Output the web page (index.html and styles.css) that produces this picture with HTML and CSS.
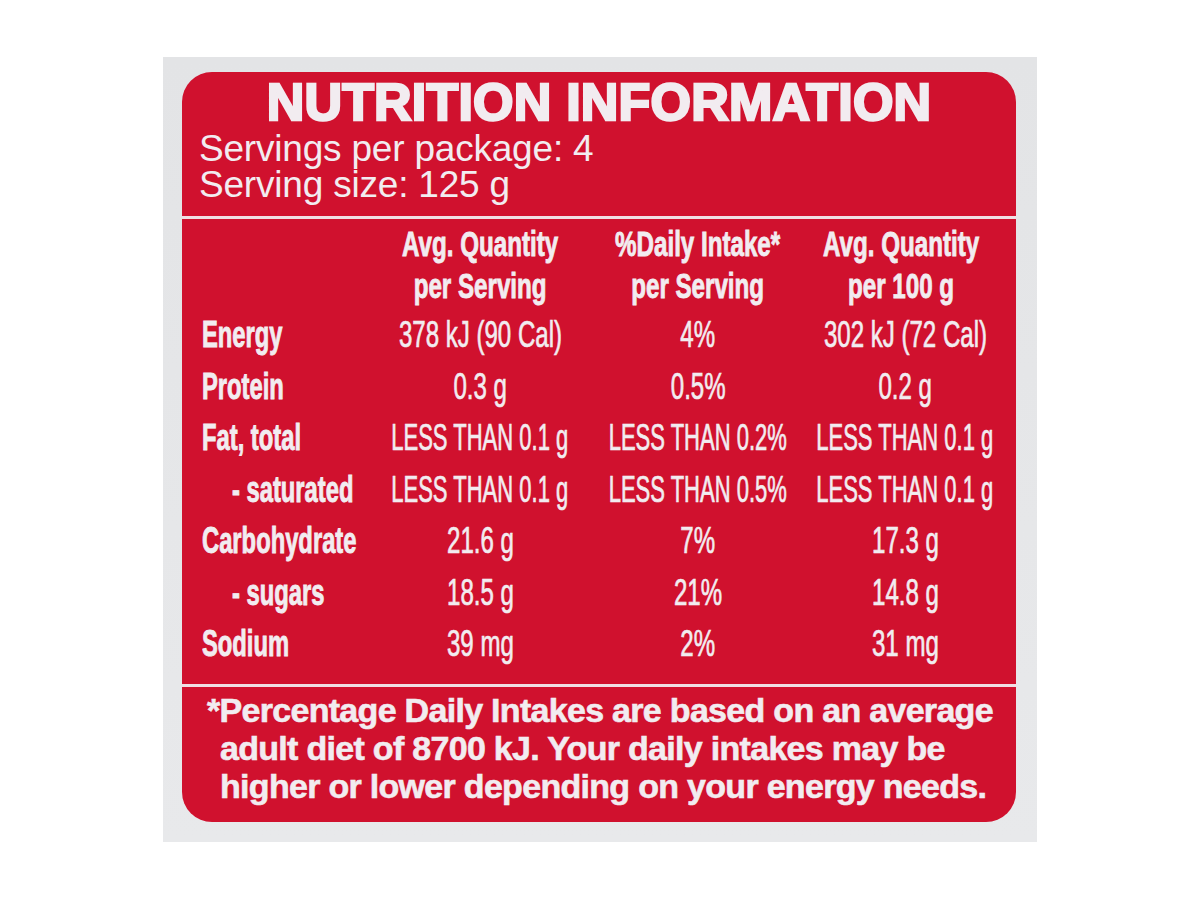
FILE: index.html
```html
<!DOCTYPE html>
<html lang="en">
<head>
<meta charset="utf-8">
<title>Nutrition Information</title>
<link rel="stylesheet" href="styles.css">
</head>
<body>
<div class="card">
  <div class="panel">
    <header class="head">
      <h1 class="title">NUTRITION INFORMATION</h1>
      <p class="serv">Servings per package: 4</p>
      <p class="serv">Serving size: 125 g</p>
    </header>
    <div class="table">
      <div class="hcell"></div>
      <div class="hcell"><span class="cb">Avg. Quantity<br>per Serving</span></div>
      <div class="hcell"><span class="cb">%Daily Intake*<br>per Serving</span></div>
      <div class="hcell h3"><span class="cb">Avg. Quantity<br>per 100 g</span></div>

      <div class="lab"><span class="cl">Energy</span></div>
      <div class="val"><span class="cr">378 kJ (90 Cal)</span></div>
      <div class="val"><span class="cr">4%</span></div>
      <div class="val"><span class="cr">302 kJ (72 Cal)</span></div>

      <div class="lab"><span class="cl">Protein</span></div>
      <div class="val"><span class="cr">0.3 g</span></div>
      <div class="val"><span class="cr">0.5%</span></div>
      <div class="val"><span class="cr">0.2 g</span></div>

      <div class="lab"><span class="cl">Fat, total</span></div>
      <div class="val"><span class="cr lt">LESS THAN 0.1 g</span></div>
      <div class="val"><span class="cr lt">LESS THAN 0.2%</span></div>
      <div class="val"><span class="cr lt">LESS THAN 0.1 g</span></div>

      <div class="lab sub"><span class="cl">- saturated</span></div>
      <div class="val"><span class="cr lt">LESS THAN 0.1 g</span></div>
      <div class="val"><span class="cr lt">LESS THAN 0.5%</span></div>
      <div class="val"><span class="cr lt">LESS THAN 0.1 g</span></div>

      <div class="lab"><span class="cl">Carbohydrate</span></div>
      <div class="val"><span class="cr">21.6 g</span></div>
      <div class="val"><span class="cr">7%</span></div>
      <div class="val"><span class="cr">17.3 g</span></div>

      <div class="lab sub"><span class="cl">- sugars</span></div>
      <div class="val"><span class="cr">18.5 g</span></div>
      <div class="val"><span class="cr">21%</span></div>
      <div class="val"><span class="cr">14.8 g</span></div>

      <div class="lab"><span class="cl">Sodium</span></div>
      <div class="val"><span class="cr">39 mg</span></div>
      <div class="val"><span class="cr">2%</span></div>
      <div class="val"><span class="cr">31 mg</span></div>
    </div>
    <footer class="note">
      <p>*Percentage Daily Intakes are based on an average<br>adult diet of 8700 kJ. Your daily intakes may be<br>higher or lower depending on your energy needs.</p>
    </footer>
  </div>
</div>
</body>
</html>
```

FILE: styles.css
```css
* { box-sizing: border-box; }

html, body {
  margin: 0;
  padding: 0;
  background: #ffffff;
}

body {
  width: 1200px;
  height: 900px;
  overflow: hidden;
  font-family: "Liberation Sans", Arial, sans-serif;
  color: #f2ecf0;
}

.card {
  width: 874px;
  height: 785px;
  margin: 57px 0 0 163px;
  padding: 15px 21px 20px 19px;
  background: linear-gradient(#e3e4e6, #e8e9eb);
}

.panel {
  width: 834px;
  height: 750px;
  background: #d0112e;
  border-radius: 30px;
  display: flex;
  flex-direction: column;
  padding-top: 4px;
}

.head {
  padding: 0 0 13px 17px;
  border-bottom: 3px solid #f0dfe4;
}

.title {
  margin: 0 0 3px -17px;
  font-size: 52px;
  line-height: 52px;
  font-weight: 700;
  text-align: center;
  letter-spacing: 0.2px;
  -webkit-text-stroke: 2.5px #f2ecf0;
}

.serv {
  margin: 0;
  font-size: 37px;
  line-height: 36px;
  font-weight: 400;
  letter-spacing: -0.2px;
}

.table {
  display: grid;
  grid-template-columns: 173px 210px 226px 188px;
  grid-template-rows: 86px repeat(7, 51.5px);
  padding: 4px 17px 14px 20px;
  border-bottom: 3px solid #f0dfe4;
}

.hcell {
  display: flex;
  justify-content: center;
  align-items: flex-start;
  white-space: nowrap;
}

.h3 { padding-right: 8px; }

.cb {
  display: inline-block;
  font-size: 35px;
  line-height: 42px;
  font-weight: 700;
  text-align: center;
  transform: scaleX(0.69);
  transform-origin: center top;
  -webkit-text-stroke: 0.9px #f2ecf0;
}

.lab {
  white-space: nowrap;
}

.lab.sub { padding-left: 30px; }

.cl {
  display: inline-block;
  font-size: 36px;
  line-height: 51.5px;
  font-weight: 700;
  transform: scaleX(0.66);
  transform-origin: left center;
  -webkit-text-stroke: 0.9px #f2ecf0;
}

.val {
  display: flex;
  justify-content: center;
  white-space: nowrap;
}

.cr {
  display: inline-block;
  font-size: 37px;
  line-height: 51.5px;
  font-weight: 400;
  transform: scaleX(0.65);
  transform-origin: center center;
  -webkit-text-stroke: 0.7px #f2ecf0;
}

.cr.lt { transform: scaleX(0.595); }

.note {
  flex: 1;
  padding: 4px 0 0 38px;
}

.note p {
  margin: 0;
  font-size: 34px;
  line-height: 38px;
  font-weight: 700;
  letter-spacing: -0.7px;
  text-indent: -13px;
  white-space: nowrap;
  -webkit-text-stroke: 0.6px #f2ecf0;
}
```
